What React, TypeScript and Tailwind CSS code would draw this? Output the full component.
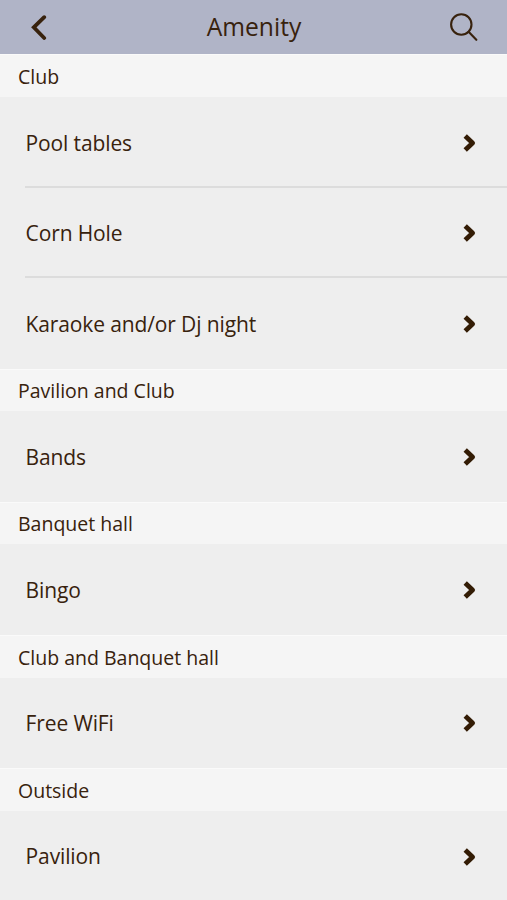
const sections = [
  { title: "Club", items: ["Pool tables", "Corn Hole", "Karaoke and/or Dj night"] },
  { title: "Pavilion and Club", items: ["Bands"] },
  { title: "Banquet hall", items: ["Bingo"] },
  { title: "Club and Banquet hall", items: ["Free WiFi"] },
  { title: "Outside", items: ["Pavilion"] },
];

function RowChevron() {
  return (
    <svg
      viewBox="0 0 14 20"
      className="mr-[30px] h-5 w-3.5 shrink-0"
      fill="none"
      stroke="#331c05"
      strokeWidth="4.8"
      strokeLinejoin="round"
    >
      <path d="M2.2 2.9 L9.6 10 L2.2 17.1" />
    </svg>
  );
}

export default function App() {
  return (
    <div className="h-[900px] w-full overflow-hidden bg-[#eeeeee] font-['Open_Sans',sans-serif] text-[#38220d]">
      <header className="grid h-[54.4px] grid-cols-[1fr_auto_1fr] items-center bg-[#b0b4c7] pr-[29px] pl-[30px]">
        <button aria-label="Back" className="justify-self-start">
          <svg
            viewBox="0 0 18 26"
            className="h-[26px] w-[18px]"
            fill="none"
            stroke="#38220d"
            strokeWidth="3.8"
            strokeLinecap="round"
          >
            <path d="M14.2 3.2 L3.8 13.4 L14.2 24" />
          </svg>
        </button>
        <h1 className="text-[24.6px] leading-none">Amenity</h1>
        <button aria-label="Search" className="justify-self-end">
          <svg viewBox="0 0 28 28" className="size-7" fill="none" stroke="#38220d" strokeWidth="2.1" strokeLinecap="round">
            <circle cx="11.3" cy="11.5" r="10.2" />
            <path d="M18.6 18.8 L26.3 26.8" />
          </svg>
        </button>
      </header>

      {sections.map((section) => (
        <section key={section.title}>
          <h2 className="flex h-[42.7px] items-center border-t border-[#fafafa] bg-[#f5f5f5] pt-px pl-[18px] text-[19.5px]">
            {section.title}
          </h2>
          <ul className="pl-[25px]">
            {section.items.map((item) => (
              <li
                key={item}
                className="flex h-[90.5px] items-center justify-between border-b-2 border-[#dcdcdc] pt-[3px] text-[21px] tracking-[-0.13px] last:border-b-0 last:pt-px"
              >
                <span className="pt-px pl-[0.6px]">{item}</span>
                <RowChevron />
              </li>
            ))}
          </ul>
        </section>
      ))}
    </div>
  );
}
